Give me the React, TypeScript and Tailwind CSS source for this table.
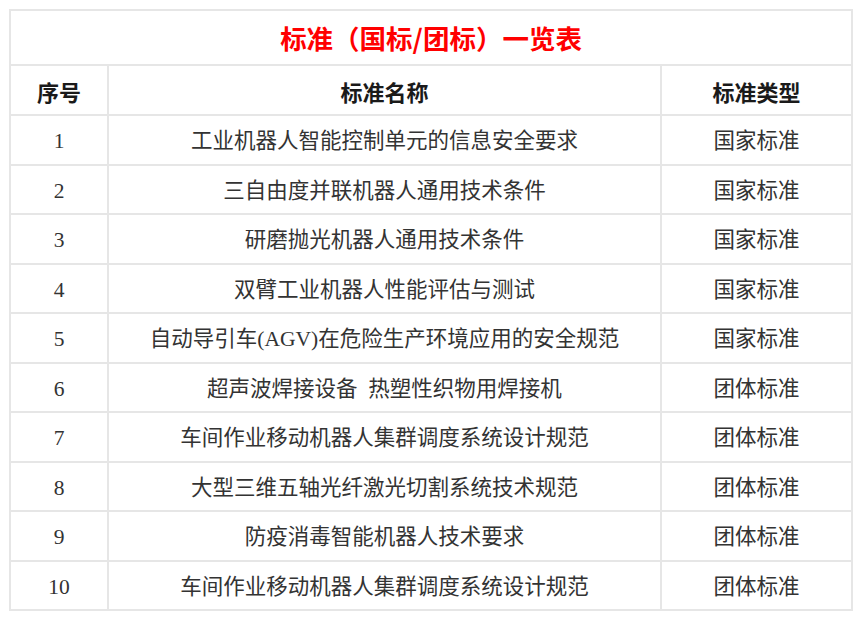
import React from "react";

const rows: [string, string, string][] = [
  ["1", "工业机器人智能控制单元的信息安全要求", "国家标准"],
  ["2", "三自由度并联机器人通用技术条件", "国家标准"],
  ["3", "研磨抛光机器人通用技术条件", "国家标准"],
  ["4", "双臂工业机器人性能评估与测试", "国家标准"],
  ["5", "自动导引车(AGV)在危险生产环境应用的安全规范", "国家标准"],
  ["6", "超声波焊接设备\u2002热塑性织物用焊接机", "团体标准"],
  ["7", "车间作业移动机器人集群调度系统设计规范", "团体标准"],
  ["8", "大型三维五轴光纤激光切割系统技术规范", "团体标准"],
  ["9", "防疫消毒智能机器人技术要求", "团体标准"],
  ["10", "车间作业移动机器人集群调度系统设计规范", "团体标准"],
];

export default function App() {
  return (
    <div className="w-[860px] h-[619px] bg-white pt-[9px] pl-[9px]">
      <table
        className="border-collapse table-fixed w-[842px]"
        style={{ fontFamily: '"Liberation Serif", "Noto Sans CJK SC", serif' }}
      >
        <colgroup>
          <col className="w-[98px]" />
          <col className="w-[553px]" />
          <col className="w-[191px]" />
        </colgroup>
        <tbody>
          <tr className="h-[55px]">
            <td
              colSpan={3}
              className="border-2 border-[#e6e6e6] text-center text-[26.5px] font-bold text-[#ff0000] leading-none pt-[2px]"
              style={{ fontFamily: '"Noto Sans CJK SC", sans-serif' }}
            >
              标准（国标/团标）一览表
            </td>
          </tr>
          <tr className="h-[50px]">
            {["序号", "标准名称", "标准类型"].map((h) => (
              <td
                key={h}
                className="border-2 border-[#e6e6e6] text-center text-[22px] font-bold text-[#1a1a1a] leading-none pt-[2px]"
                style={{ fontFamily: '"Noto Sans CJK SC", sans-serif' }}
              >
                {h}
              </td>
            ))}
          </tr>
          {rows.map(([n, name, type]) => (
            <tr key={n} className="h-[49.5px]">
              <td className="border-2 border-[#e6e6e6] text-center text-[21.5px] text-[#333333] leading-none pt-[4px]">
                {n}
              </td>
              <td className="border-2 border-[#e6e6e6] text-center text-[21.5px] text-[#333333] leading-none whitespace-nowrap pt-[4px]">
                {name}
              </td>
              <td className="border-2 border-[#e6e6e6] text-center text-[21.5px] text-[#333333] leading-none pt-[4px]">
                {type}
              </td>
            </tr>
          ))}
        </tbody>
      </table>
    </div>
  );
}
